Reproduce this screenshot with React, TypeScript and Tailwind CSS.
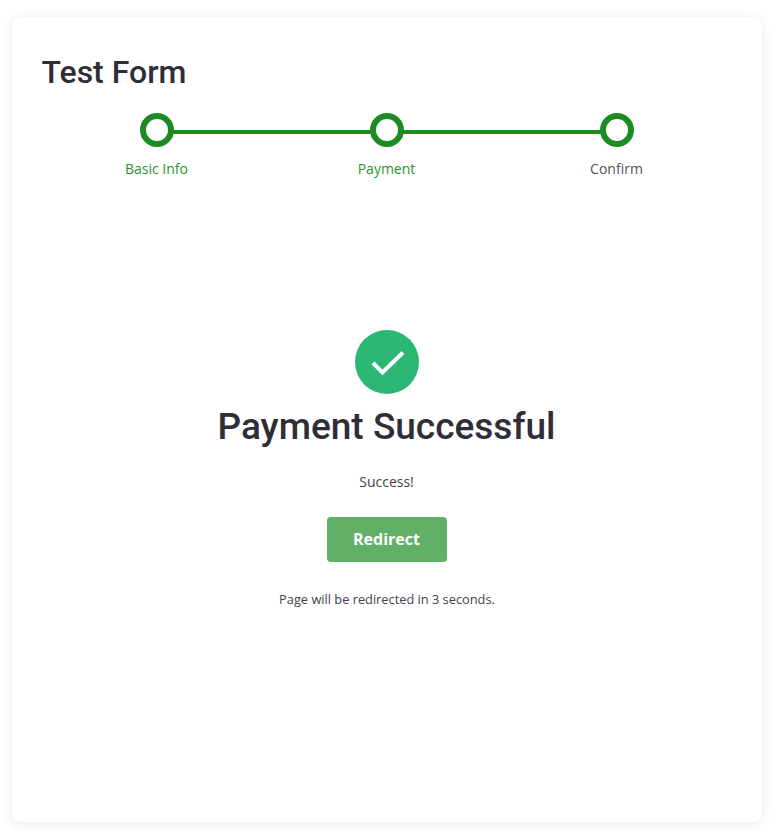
const steps = [
  { label: "Basic Info", active: true },
  { label: "Payment", active: true },
  { label: "Confirm", active: false },
];

export default function App() {
  return (
    <div className="h-[834px] w-full bg-white pl-3 pr-[14px] pt-[17px] font-['Open_Sans',sans-serif] text-[#2f2e38] antialiased">
      <main className="flex h-[805px] flex-col rounded-lg bg-white pt-[36px] shadow-[0_2px_12px_rgba(20,20,43,0.09)]">
        <h1 className="pl-[29.5px] font-['Roboto',sans-serif] text-[32px] font-medium leading-[38px]">Test Form</h1>
        <div className="mx-auto mt-[22px] grid w-[690px] grid-cols-3">
          {steps.map((step, i) => (
            <div key={step.label} className="flex flex-col items-center">
              <div className="flex w-full items-center">
                <span className={i > 0 ? "-mr-px mt-1 h-1 flex-1 bg-[#1c8c22]" : "-mr-px h-1 flex-1"} />
                <span className="size-[34px] rounded-full border-[6px] border-[#1c8c22] bg-white" />
                <span className={i < 2 ? "-ml-px mt-1 h-1 flex-1 bg-[#1c8c22]" : "-ml-px h-1 flex-1"} />
              </div>
              <span className={step.active ? "mt-[12px] pr-px text-sm leading-5 text-[#2a9430]" : "mt-[12px] pr-px text-sm leading-5 text-[#54535b]"}>{step.label}</span>
            </div>
          ))}
        </div>
        <section className="mt-[151px] flex flex-col items-center">
          <svg width="64" height="64" viewBox="0 0 64 64" fill="none">
            <circle cx="32" cy="32" r="32" fill="#2bb673" />
            <path d="M18 33L27.5 42.5L48 22.5" stroke="white" strokeWidth="4" />
          </svg>
          <h2 className="mt-[10px] pr-px font-['Roboto',sans-serif] text-[37px] font-medium leading-[46px]">Payment Successful</h2>
          <p className="mt-[22px] pr-px text-sm leading-5 text-[#44434c]">Success!</p>
          <button className="mt-[25px] h-[45px] w-[120px] rounded bg-[#60b067] pb-0.5 pr-[7px] pl-1.5 text-base font-bold text-white">Redirect</button>
          <p className="mt-[27px] text-[12.8px] leading-5 text-[#44434c]">Page will be redirected in 3 seconds.</p>
        </section>
      </main>
    </div>
  );
}
